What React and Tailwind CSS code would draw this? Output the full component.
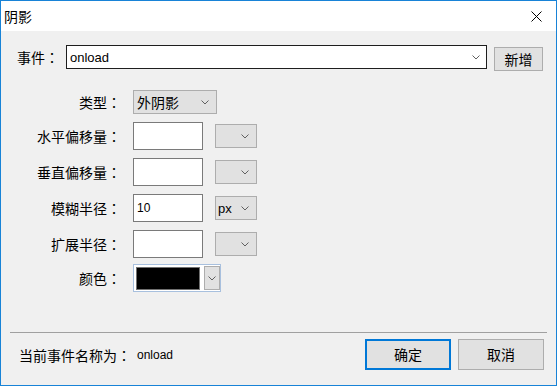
import React from "react";

const CJK = "font-['Noto_Sans_CJK_SC',sans-serif]";
const LAT = "font-['Liberation_Sans','Noto_Sans_CJK_SC',sans-serif]";

// colon glyph centred in its box, like the reference's system font
const Colon = () => <span className="font-['Noto_Sans_CJK_TC',sans-serif]">：</span>;

const Chevron = ({ className = "" }) => (
  <svg width="8" height="5" viewBox="0 0 8 5" className={className}>
    <path d="M0.5 0.5 L4 4 L7.5 0.5" fill="none" stroke="#606060" strokeWidth="1" />
  </svg>
);

const Label = ({ children }) => (
  <div className={`w-[120px] text-right text-[14px] leading-[16px] ${CJK}`}>
    {children}
    <Colon />
  </div>
);

const TextBox = ({ value }) => (
  <div className={`w-[70px] h-[28px] bg-white border border-[#7a7a7a] flex items-center pl-[3px] text-[12px] ${LAT}`}>
    {value}
  </div>
);

const UnitSelect = ({ value }) => (
  <div className="ml-[12px] w-[42px] h-[24px] bg-[#e1e1e1] border border-[#adadad] flex items-center justify-between pl-[2px] pr-[7px]">
    <span className={`text-[13px] leading-none ${LAT}`}>{value}</span>
    <Chevron />
  </div>
);

const rows = [
  { label: "水平偏移量", value: "", unit: "" },
  { label: "垂直偏移量", value: "", unit: "" },
  { label: "模糊半径", value: "10", unit: "px" },
  { label: "扩展半径", value: "", unit: "" },
];

export default function App() {
  return (
    <div className="w-[557px] h-[386px] border border-[#1883d7] flex flex-col bg-[#f0f0f0] text-black">
      {/* title bar */}
      <div className="h-[30px] bg-white flex items-center justify-between pl-[3px] pr-[14px] shrink-0">
        <span className={`text-[14px] leading-none ${CJK}`}>阴影</span>
        <svg width="11" height="11" viewBox="0 0 11 11">
          <path d="M0.5 0.5 L10.5 10.5 M10.5 0.5 L0.5 10.5" stroke="#000" strokeWidth="1" />
        </svg>
      </div>

      <div className="flex-1 flex flex-col">
        {/* event row */}
        <div className="flex items-start pl-[16px] mt-[14px]">
          <div className={`w-[49px] h-[24px] flex items-center text-[14px] ${CJK}`}>
            事件<Colon />
          </div>
          <div className="w-[421px] h-[24px] bg-white border border-[#1e1e1e] flex items-center justify-between pl-[3px] pr-[6px]">
            <span className={`text-[13px] leading-none ${LAT}`}>onload</span>
            <Chevron />
          </div>
          <button className={`ml-[7px] mt-[2px] w-[49px] h-[24px] bg-[#e1e1e1] border border-[#adadad] flex items-center justify-center text-[14px] ${CJK}`}>
            新增
          </button>
        </div>

        {/* type */}
        <div className="flex items-center mt-[19px] h-[24px]">
          <Label>类型</Label>
          <div className="ml-[12px] w-[84px] h-[24px] bg-[#e1e1e1] border border-[#adadad] flex items-center justify-between pl-[3px] pr-[7px]">
            <span className={`text-[14px] leading-none ${CJK}`}>外阴影</span>
            <Chevron />
          </div>
        </div>

        {rows.map((r) => (
          <div key={r.label} className="flex items-center mt-[8px] h-[28px]">
            <Label>{r.label}</Label>
            <div className="ml-[12px]">
              <TextBox value={r.value} />
            </div>
            <UnitSelect value={r.unit} />
          </div>
        ))}

        {/* colour */}
        <div className="flex items-center mt-[6px] h-[28px]">
          <Label>颜色</Label>
          <div className="ml-[12px] w-[88px] h-[28px] border border-[#a8c0de] bg-white flex items-center pl-[2px] gap-[4px]">
            <div className="w-[64px] h-[23px] bg-black border border-[#707070]" />
            <div className="w-[16px] h-[24px] bg-[#e1e1e1] border border-[#adadad] flex items-center justify-center">
              <Chevron />
            </div>
          </div>
        </div>

        {/* footer */}
        <div className="mt-auto">
          <div className="mx-[9px] h-px bg-[#a0a0a0]" />
          <div className="flex items-center justify-between mt-[6px] pl-[18px] pr-[12px] pb-[15px]">
            <div className="flex items-center">
              <span className={`text-[14px] leading-none ${CJK}`}>
                当前事件名称为<Colon />
              </span>
              <span className={`text-[12px] leading-none ml-[6px] ${LAT}`}>onload</span>
            </div>
            <div className="flex gap-[7px]">
              <button className={`w-[86px] h-[31px] bg-[#e1e1e1] border-2 border-[#0078d7] text-[14px] ${CJK}`}>确定</button>
              <button className={`w-[86px] h-[31px] bg-[#e1e1e1] border border-[#adadad] text-[14px] ${CJK}`}>取消</button>
            </div>
          </div>
        </div>
      </div>
    </div>
  );
}
